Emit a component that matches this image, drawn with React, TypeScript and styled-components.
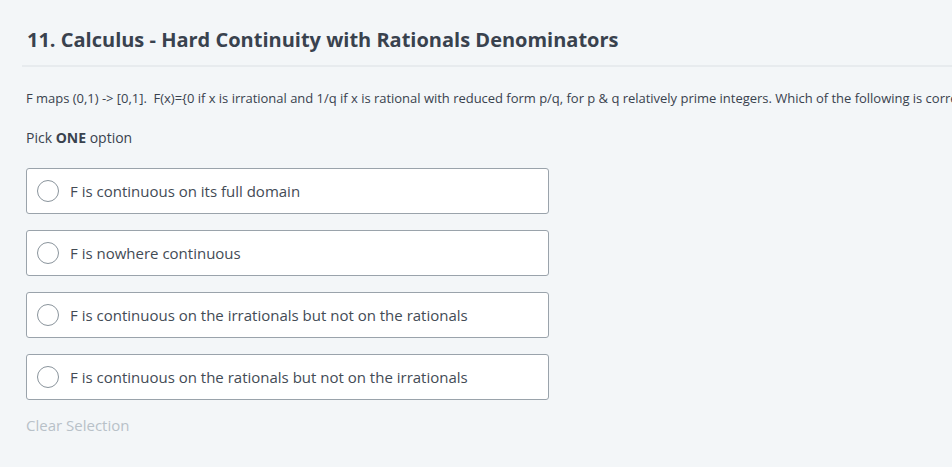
import React, { useState } from "react";
import styled, { createGlobalStyle } from "styled-components";

const GlobalStyle = createGlobalStyle`
  html, body {
    margin: 0;
    padding: 0;
    background: #f3f6f8;
  }
  body {
    font-family: "Open Sans", "Liberation Sans", sans-serif;
    color: #39424e;
  }
`;

const OPTIONS = [
  "F is continuous on its full domain",
  "F is nowhere continuous",
  "F is continuous on the irrationals but not on the rationals",
  "F is continuous on the rationals but not on the irrationals",
];

export default function App() {
  const [picked, setPicked] = useState<number | null>(null);

  return (
    <Page>
      <GlobalStyle />
      <Header>
        <Title>11. Calculus - Hard Continuity with Rationals Denominators</Title>
      </Header>
      <Statement>
        F maps (0,1) -&gt; [0,1].&nbsp; F(x)={"{"}0 if x is irrational and 1/q if x is rational with reduced
        form p/q, for p &amp; q relatively prime integers. Which of the following is correct?
      </Statement>
      <Hint>
        Pick <b>ONE</b> option
      </Hint>
      <OptionList>
        {OPTIONS.map((text, i) => (
          <Option key={i} onClick={() => setPicked(i)}>
            <Radio $checked={picked === i} />
            <OptionText>{text}</OptionText>
          </Option>
        ))}
      </OptionList>
      <ClearButton onClick={() => setPicked(null)}>Clear Selection</ClearButton>
    </Page>
  );
}

const Page = styled.div`
  width: 952px;
  height: 467px;
  overflow: hidden;
  padding: 0 0 0 26px;
  box-sizing: border-box;
`;

const Header = styled.div`
  margin-left: -4px;
  padding: 27px 0 12px 5px;
  border-bottom: 2px solid #e7ebee;
`;

const Title = styled.h1`
  margin: 0;
  font-size: 20px;
  font-weight: 700;
  line-height: 26px;
  color: #39424e;
  white-space: nowrap;
`;

const Statement = styled.p`
  margin: 23px 0 0 0;
  font-size: 13px;
  letter-spacing: -0.02px;
  line-height: 16px;
  color: #39424e;
  white-space: nowrap;
`;

const Hint = styled.p`
  margin: 23px 0 0 0;
  font-size: 14px;
  line-height: 18px;
  color: #39424e;

  b {
    font-weight: 700;
  }
`;

const OptionList = styled.div`
  display: flex;
  flex-direction: column;
  gap: 16px;
  margin-top: 21px;
  width: 523px;
`;

const Option = styled.label`
  display: flex;
  align-items: center;
  gap: 11px;
  height: 46px;
  box-sizing: border-box;
  padding: 0 10px;
  background: #ffffff;
  border: 1px solid #9aa3ab;
  border-radius: 3px;
  cursor: pointer;
`;

const Radio = styled.span<{ $checked: boolean }>`
  width: 22px;
  height: 22px;
  box-sizing: border-box;
  border-radius: 50%;
  border: 1px solid #8a949c;
  background: #fff;
  box-shadow: ${(p) => (p.$checked ? "inset 0 0 0 5px #fff, inset 0 0 0 11px #39424e" : "none")};
  flex-shrink: 0;
`;

const OptionText = styled.span`
  font-size: 15px;
  color: #434b55;
`;

const ClearButton = styled.button`
  margin-top: 15px;
  padding: 0;
  border: none;
  background: none;
  font-family: inherit;
  font-size: 15px;
  line-height: 20px;
  color: #b8c1c8;
  cursor: pointer;
`;
